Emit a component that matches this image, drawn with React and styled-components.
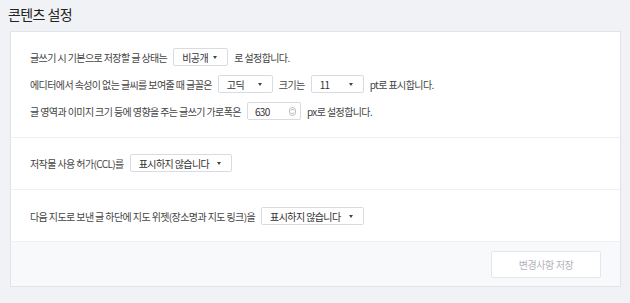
import React from 'react';
import styled, { createGlobalStyle } from 'styled-components';

const GlobalStyle = createGlobalStyle`
    * { box-sizing: border-box; }
    body {
        margin: 0;
        background: #f1f2f6;
        font-family: "Noto Sans CJK KR", "Noto Sans", sans-serif;
        color: #333;
    }
`;

const Page = styled.div`
    display: flex;
    flex-direction: column;
    width: 630px;
    height: 303px;
    padding: 6px 9px 0 10px;
`;

const Title = styled.h2`
    margin: 0 0 8px -2px;
    font-size: 14px;
    font-weight: 400;
    line-height: 17px;
    letter-spacing: -0.6px;
    color: #222;
`;

const Card = styled.div`
    display: flex;
    flex-direction: column;
    background: #fff;
    border: 1px solid #e1e3ea;
`;

const Section = styled.div`
    display: flex;
    flex-direction: column;
    gap: 9px;
    padding: ${({ $pad }) => $pad};
    border-bottom: 1px solid #eef0f4;
`;

const Row = styled.div`
    display: flex;
    align-items: center;
    gap: 6px;
    height: 18px;
    font-size: 10px;
    letter-spacing: -0.6px;
    color: #444;
`;

const Box = styled.div`
    display: flex;
    align-items: center;
    justify-content: space-between;
    width: ${({ $w }) => $w}px;
    height: 18px;
    padding: ${({ $pad }) => $pad || '0 10px 0 8px'};
    border: 1px solid #d9dbe1;
    border-radius: 2px;
    background: #fff;
    font-size: 10px;
    color: #333;
`;

const Caret = styled.span`
    width: 0;
    height: 0;
    border-left: 2.5px solid transparent;
    border-right: 2.5px solid transparent;
    border-top: 3px solid #444;
`;

const Footer = styled.div`
    display: flex;
    justify-content: flex-end;
    padding: 9px 19px 8px;
    background: #f8f9fb;
`;

const SaveButton = styled.button`
    width: 110px;
    height: 27px;
    border: 1px solid #e4e6ec;
    border-radius: 2px;
    background: #fff;
    font-family: inherit;
    font-size: 10px;
    letter-spacing: -0.4px;
    color: #b1b3b9;
`;

const Select = ({ w, children }) => (
    <Box $w={w}>
        <span>{children}</span>
        <Caret />
    </Box>
);

const Spinner = () => (
    <svg width="7" height="9" viewBox="0 0 7 9">
        <rect x="0.5" y="0.5" width="6" height="8" rx="3" fill="none" stroke="#bbb" />
        <path d="M2 3.5 L3.5 2 L5 3.5 M2 5.5 L3.5 7 L5 5.5" fill="none" stroke="#999" strokeWidth="0.8" />
    </svg>
);

const App = () => (
    <Page>
        <GlobalStyle />
        <Title>콘텐츠 설정</Title>
        <Card>
            <Section $pad="16px 19px 17px">
                <Row>
                    글쓰기 시 기본으로 저장할 글 상태는
                    <Select w={55}>비공개</Select>
                    로 설정합니다.
                </Row>
                <Row>
                    에디터에서 속성이 없는 글씨를 보여줄 때 글꼴은
                    <Select w={55}>고딕</Select>
                    크기는
                    <Select w={53}>11</Select>
                    pt로 표시합니다.
                </Row>
                <Row>
                    글 영역과 이미지 크기 등에 영향을 주는 글쓰기 가로폭은
                    <Box $w={54} $pad="0 4px 0 7px">
                        <span>630</span>
                        <Spinner />
                    </Box>
                    px로 설정합니다.
                </Row>
            </Section>
            <Section $pad="16px 19px 17px">
                <Row>
                    저작물 사용 허가(CCL)를
                    <Select w={102}>표시하지 않습니다</Select>
                </Row>
            </Section>
            <Section $pad="17px 19px 16px">
                <Row>
                    다음 지도로 보낸 글 하단에 지도 위젯(장소명과 지도 링크)을
                    <Select w={103}>표시하지 않습니다</Select>
                </Row>
            </Section>
            <Footer>
                <SaveButton>변경사항 저장</SaveButton>
            </Footer>
        </Card>
    </Page>
);

export default App;
